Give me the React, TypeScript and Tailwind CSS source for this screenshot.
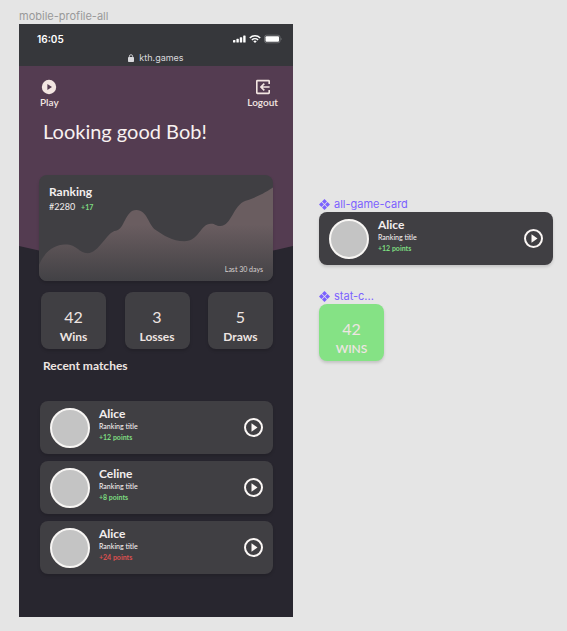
import React from "react";

type Match = { name: string; points: string; won: boolean };

const matches: Match[] = [
  { name: "Alice", points: "+12 points", won: true },
  { name: "Celine", points: "+8 points", won: true },
  { name: "Alice", points: "+24 points", won: false },
];

const stats = [
  { value: 42, label: "Wins" },
  { value: 3, label: "Losses" },
  { value: 5, label: "Draws" },
];

function ComponentLabel({ children }: { children: React.ReactNode }) {
  return (
    <div className="flex h-4 items-center gap-1 font-['Inter',sans-serif] text-[11px] leading-4 text-[#7b61ff]">
      <svg viewBox="0 0 12 12" className="size-[11px]" fill="currentColor" aria-hidden="true">
        <path d="M6 0l2.7 2.7L6 5.4 3.3 2.7zM6 6.6l2.7 2.7L6 12 3.3 9.3zM2.7 3.3L5.4 6 2.7 8.7 0 6zM9.3 3.3L12 6 9.3 8.7 6.6 6z" />
      </svg>
      <span>{children}</span>
    </div>
  );
}

function GameCard({ name, points, won }: Match) {
  return (
    <article className="flex h-[53px] items-center rounded-lg bg-[#403f43] px-[10px] text-[#f3eeee] shadow-[0_2px_3px_rgba(0,0,0,0.15)]">
      <div className="size-10 shrink-0 rounded-full border-2 border-[#f7f5f3] bg-[#c4c4c4]" />
      <div className="ml-[9px] h-[42px] grow">
        <h3 className="text-xs leading-[14px] font-bold">{name}</h3>
        <p className="text-[7px] leading-[10px] font-medium">Ranking title</p>
        <p className={`text-[7px] leading-3 font-bold ${won ? "text-[#7ddb80]" : "text-[#db4f4f]"}`}>{points}</p>
      </div>
      <button type="button" aria-label={`Play against ${name}`} className="size-[19px]">
        <svg viewBox="0 0 19 19" className="size-full">
          <circle cx="9.5" cy="9.5" r="8.5" fill="none" stroke="#fbf7f5" strokeWidth="2" />
          <path d="M7.5 5.2v8.6l6-4.3z" fill="#fbf7f5" />
        </svg>
      </button>
    </article>
  );
}

function StatCard({ value, label, highlight = false }: { value: number; label: string; highlight?: boolean }) {
  return (
    <div
      className={`flex h-[57px] w-[65px] flex-col items-center rounded-lg pt-[15px] text-[#eee5e2] shadow-[0_2px_3px_rgba(0,0,0,0.15)] ${
        highlight ? "bg-[#85e285]" : "bg-[#403f43]"
      }`}
    >
      <span className="text-base leading-5">{value}</span>
      <span className={`text-xs leading-5 ${highlight ? "font-semibold" : "font-bold"}`}>{label}</span>
    </div>
  );
}

function StatusBar() {
  return (
    <div className="h-[42px] bg-[#36373b] pt-[7px] text-white">
      <div className="flex h-4 items-center justify-between pr-[11px] pl-[18px]">
        <span className="font-['Inter',sans-serif] text-[10px] leading-4 font-semibold">16:05</span>
        <svg viewBox="0 0 49 10" className="h-[10px] w-[49px]" fill="white" aria-hidden="true">
          <rect x="0" y="6" width="2.4" height="2.5" rx=".6" />
          <rect x="3.4" y="4.8" width="2.4" height="3.7" rx=".6" />
          <rect x="6.8" y="3.2" width="2.4" height="5.3" rx=".6" />
          <rect x="10.2" y="1.5" width="2.4" height="7" rx=".6" />
          <path d="M16.8 3.9a7.2 7.2 0 0 1 10.4 0M18.9 6a4.4 4.4 0 0 1 6.2 0" fill="none" stroke="white" strokeWidth="1.5" />
          <path d="M20.3 7.2a2.6 2.6 0 0 1 3.4 0L22 8.9z" />
          <rect x="31.5" y="1.2" width="15.5" height="7.6" rx="2" fill="none" stroke="#77787c" strokeWidth=".8" />
          <rect x="32.5" y="2.2" width="13.5" height="5.6" rx="1" />
          <path d="M47.8 3.8v2.4c.9-.3.9-2.1 0-2.4z" fill="#85868a" />
        </svg>
      </div>
      <div className="mt-[3px] flex h-4 items-center justify-center gap-[5px] font-['Inter',sans-serif] text-[9px] leading-4 text-[#d9d9dc]">
        <svg viewBox="0 0 6 8" className="h-2 w-[6px]" fill="currentColor" aria-hidden="true">
          <rect y="3" width="6" height="5" rx=".8" />
          <path d="M1.4 3.4V2.3a1.6 1.6 0 0 1 3.2 0v1.1" fill="none" stroke="currentColor" strokeWidth=".9" />
        </svg>
        <span>kth.games</span>
      </div>
    </div>
  );
}

function RankingCard() {
  return (
    <section className="relative h-[106px] overflow-hidden rounded-lg bg-[#403f43] text-[#f3eeee] shadow-[0_2px_3px_rgba(0,0,0,0.15)]">
      <svg viewBox="72 30 702 320" preserveAspectRatio="none" className="absolute inset-0 size-full" aria-hidden="true">
        <defs>
          <linearGradient id="area" gradientUnits="userSpaceOnUse" x1="0" y1="180" x2="0" y2="350">
            <stop offset="0" stopColor="#6a5d60" />
            <stop offset="1" stopColor="#424145" />
          </linearGradient>
        </defs>
        <path
          fill="url(#area)"
          d="M72 350V302C88 262 118 240 150 240C188 240 190 266 218 266C252 266 276 200 303 198C328 197 330 136 364 136C397 136 400 182 422 196C447 212 470 230 508 230C552 230 556 177 588 177C601 177 602 184 616 184C650 184 654 121 692 108C722 98 740 90 774 68V350Z"
        />
      </svg>
      <div className="relative flex h-full flex-col px-[10px] pt-[9px] pb-[7px]">
        <h2 className="text-xs leading-4 font-bold">Ranking</h2>
        <p className="flex items-center gap-[6px] text-[9px] leading-[14px]">
          #2280 <span className="text-[7px] font-bold text-[#7ddb80]">+17</span>
        </p>
        <p className="mt-auto text-right text-[7px] leading-[10px] text-[#d8d2d2]">Last 30 days</p>
      </div>
    </section>
  );
}

function Phone() {
  return (
    <div className="h-[593px] bg-[#28262f] font-['Lato',sans-serif]">
      <StatusBar />
      <main className="relative">
        <svg viewBox="0 0 274 200" preserveAspectRatio="none" className="absolute inset-x-0 top-0 h-[200px] w-full" aria-hidden="true">
          <path d="M0 0H274V180Q137 214 0 180Z" fill="#543c51" />
        </svg>
        <div className="relative px-5 pt-[13px]">
          <nav className="-mr-[5px] flex justify-between pl-px text-[10px] leading-[14px] font-semibold text-[#f3e6e2]">
            <button type="button" className="flex flex-col items-center">
              <svg viewBox="0 0 16 16" className="size-4" aria-hidden="true">
                <circle cx="8" cy="8" r="7.2" fill="#f3e6e2" />
                <path d="M6.4 4.9v6.2L11 8z" fill="#543c51" />
              </svg>
              Play
            </button>
            <button type="button" className="flex flex-col items-center">
              <svg viewBox="0 0 16 16" className="size-4" fill="none" stroke="#f3e6e2" strokeWidth="1.6" aria-hidden="true">
                <path d="M14.2 5V2.2a.6.6 0 0 0-.6-.6H2.4a.6.6 0 0 0-.6.6v11.6a.6.6 0 0 0 .6.6h11.2a.6.6 0 0 0 .6-.6V11" />
                <path d="M14.6 8H6M9.3 4.6L5.9 8l3.4 3.4" />
              </svg>
              Logout
            </button>
          </nav>
          <h1 className="mt-[10px] pl-1 text-xl leading-6 text-[#f8f1f0]">Looking good Bob!</h1>
          <div className="mt-8">
            <RankingCard />
          </div>
          <div className="mt-[11px] flex justify-between pl-[2px]">
            {stats.map((s) => (
              <StatCard key={s.label} {...s} />
            ))}
          </div>
          <h2 className="mt-[9px] pl-1 text-xs leading-4 font-bold text-[#eee5e2]">Recent matches</h2>
          <div className="mt-[27px] flex flex-col gap-[7px] pl-px">
            {matches.map((m) => (
              <GameCard key={m.points} {...m} />
            ))}
          </div>
        </div>
      </main>
    </div>
  );
}

export default function App() {
  return (
    <div className="grid min-h-screen grid-cols-[274fr_234fr] items-start gap-x-[26px] bg-[#e5e5e5] pt-2 pr-[14px] pb-3 pl-[19px]">
      <div>
        <p className="font-['Inter',sans-serif] text-[11px] leading-4 text-[#999999]">mobile-profile-all</p>
        <Phone />
      </div>
      <aside className="pt-[188px] font-['Lato',sans-serif]">
        <ComponentLabel>all-game-card</ComponentLabel>
        <GameCard {...matches[0]} />
        <div className="mt-[23px]">
          <ComponentLabel>stat-c...</ComponentLabel>
          <StatCard value={42} label="WINS" highlight />
        </div>
      </aside>
    </div>
  );
}
